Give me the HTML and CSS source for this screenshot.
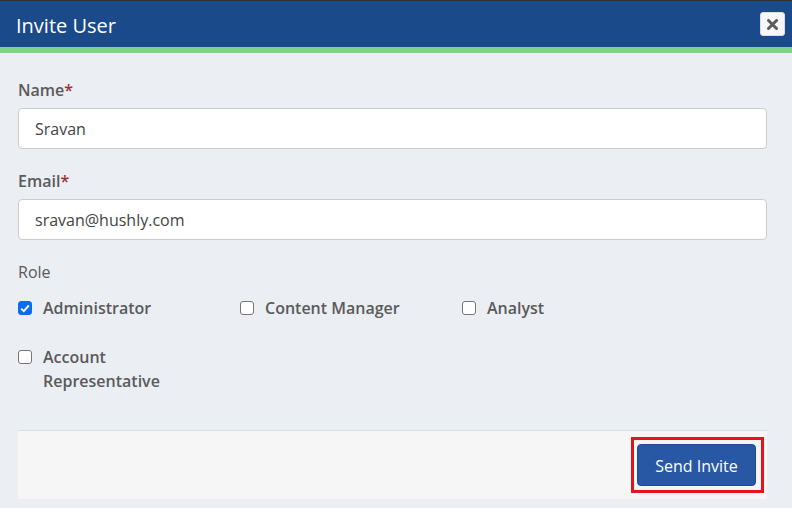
FILE: index.html
```html
<!DOCTYPE html>
<html>
<head>
<meta charset="utf-8">
<link rel="stylesheet" href="styles.css">
</head>
<body>
<div class="modal">
  <div class="modal-header">
    <h1 class="modal-title">Invite User</h1>
    <button class="close-btn" aria-label="Close">
      <svg width="11" height="11" viewBox="0 0 11 11"><path d="M1.5 1.5 L9.5 9.5 M9.5 1.5 L1.5 9.5" stroke="#5a5a5a" stroke-width="3" stroke-linecap="round"/></svg>
    </button>
  </div>
  <div class="modal-body">
    <div class="field">
      <label class="field-label">Name<span class="req">*</span></label>
      <input class="text-input" type="text" value="Sravan">
    </div>
    <div class="field">
      <label class="field-label">Email<span class="req">*</span></label>
      <input class="text-input" type="text" value="sravan@hushly.com">
    </div>
    <div class="field">
      <div class="role-label">Role</div>
      <div class="roles">
        <label class="role"><span class="box checked"><svg width="10" height="9" viewBox="0 0 10 9"><path d="M1.2 4.6 L3.8 7.2 L8.8 1.5" fill="none" stroke="#fff" stroke-width="1.9"/></svg></span><span class="role-text">Administrator</span></label>
        <label class="role"><span class="box"></span><span class="role-text">Content Manager</span></label>
        <label class="role"><span class="box"></span><span class="role-text">Analyst</span></label>
        <label class="role"><span class="box"></span><span class="role-text narrow">Account Representative</span></label>
      </div>
    </div>
  </div>
  <div class="modal-footer">
    <span class="highlight"><button class="send-btn">Send Invite</button></span>
  </div>
</div>
</body>
</html>
```
FILE: styles.css
```css
* { box-sizing: border-box; }
html, body {
  margin: 0;
  padding: 0;
  background: #ebeef3;
  font-family: "Open Sans", "Noto Sans", sans-serif;
  color: #555;
}
.modal {
  width: 792px;
  height: 508px;
  border-top: 1px solid #333;
}
.modal-header {
  height: 52px;
  background: #1b4a8b;
  border-bottom: 6px solid #7dd484;
  display: flex;
  align-items: center;
  justify-content: space-between;
  padding: 0 7px 0 16px;
}
.modal-title {
  margin: 0;
  padding-top: 3px;
  font-size: 20px;
  font-weight: 400;
  color: #fff;
  line-height: 26px;
}
.close-btn {
  width: 25px;
  height: 24px;
  background: #f7f7f7;
  border: 1px solid #ddd;
  border-radius: 3px;
  padding: 0;
  display: flex;
  align-items: center;
  justify-content: center;
}
.modal-body {
  padding: 24px 25px 0 18px;
}
.field {
  margin-bottom: 19px;
}
.field-label {
  display: block;
  font-size: 16px;
  font-weight: 600;
  line-height: 24px;
  padding-top: 1px;
  margin-bottom: 6px;
  color: #5a5a5a;
}
.req { color: #a03030; }
.text-input {
  display: block;
  width: 100%;
  height: 41px;
  border: 1px solid #ccc;
  border-radius: 4px;
  background: #fff;
  padding: 1px 16px 0;
  font-family: inherit;
  font-size: 16px;
  color: #444;
}
.role-label {
  font-size: 16px;
  line-height: 24px;
  color: #5a5a5a;
  padding-top: 1px;
  margin-bottom: 12px;
}
.roles {
  display: grid;
  grid-template-columns: 222px 222px 222px;
  row-gap: 25px;
}
.role {
  display: flex;
  align-items: flex-start;
  font-size: 16px;
  font-weight: 600;
  line-height: 24px;
  color: #5a5a5a;
}
.box {
  width: 14px;
  height: 14px;
  margin-top: 5px;
  margin-right: 11px;
  border: 1px solid #767676;
  border-radius: 3px;
  background: #fff;
  flex: none;
  display: flex;
  align-items: center;
  justify-content: center;
}
.box.checked {
  background: #0a6cf5;
  border-color: #0a6cf5;
}
.role-text.narrow { max-width: 130px; }
.modal-footer {
  margin: 37px 25px 0 18px;
  height: 69px;
  background: #f6f6f6;
  border-top: 1px solid #ddd;
  display: flex;
  align-items: center;
  justify-content: flex-end;
  padding-right: 3px;
}
.highlight {
  display: flex;
  border: 3px solid #e3141d;
  padding: 4px 5px 4px 3px;
}
.send-btn {
  width: 119px;
  height: 42px;
  background: #2858a4;
  color: #fff;
  border: 1px solid #1f4a8f;
  border-radius: 4px;
  font-family: inherit;
  font-size: 16px;
  padding: 2px 0 0;
}
```
